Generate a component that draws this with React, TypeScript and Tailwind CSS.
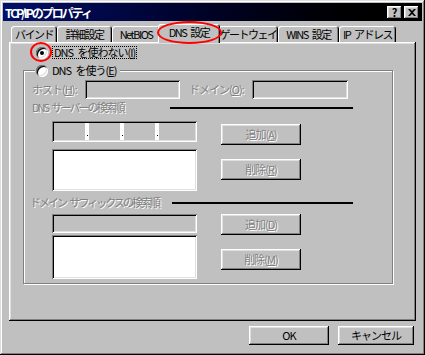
import React from 'react';

const raised =
  'shadow-[inset_-1px_-1px_0_#000,inset_1px_1px_0_#fff,inset_-2px_-2px_0_#808080,inset_2px_2px_0_#dfdfdf]';
const sunken =
  'shadow-[inset_1px_1px_0_#808080,inset_-1px_-1px_0_#fff,inset_2px_2px_0_#000,inset_-2px_-2px_0_#dfdfdf]';
const dim = 'text-[#808080] [text-shadow:1px_1px_0_#fff]';

// en space keeps the gaps visible with the tight tracking
const SP = '\u2002';

const tabs = [
  { label: 'バインド', w: 'w-[46px]' },
  { label: '詳細設定', w: 'w-[55px]' },
  { label: 'NetBIOS', w: 'w-[48px]' },
  { label: `DNS${SP}設定`, w: 'w-[62px]', active: true },
  { label: 'ゲートウェイ', w: 'w-[60px]' },
  { label: `WINS${SP}設定`, w: 'w-[61px]' },
  { label: `IP${SP}アドレス`, w: 'w-[57px]' },
];

function Radio({ checked }: { checked?: boolean }) {
  return (
    <span className="flex h-[12px] w-[12px] shrink-0 items-center justify-center rounded-full bg-white shadow-[inset_1px_1px_0_#808080,inset_-1px_-1px_0_#fff,inset_2px_2px_0_#000,inset_-2px_-2px_0_#dfdfdf]">
      {checked && <span className="h-[4px] w-[4px] rounded-full bg-black" />}
    </span>
  );
}

function Label({ text, key_ }: { text: string; key_: string }) {
  return (
    <>
      {text}(<u>{key_}</u>)
    </>
  );
}

function DimButton({ text, k, className = '' }: { text: string; k: string; className?: string }) {
  return (
    <div className={`flex h-[21px] w-[80px] items-center justify-center bg-[#c0c0c0] ${raised} ${dim} ${className}`}>
      <Label text={text} key_={k} />
    </div>
  );
}

function IpField() {
  return (
    <div className={`flex h-[21px] w-[145px] bg-white p-[2px] ${sunken}`}>
      {[0, 1, 2].map((i) => (
        <React.Fragment key={i}>
          <div className="w-[31px] bg-[#c0c0c0]" />
          <div className="flex w-[4px] items-end justify-center pb-[4px]">
            <span className="h-[1px] w-[1px] bg-black" />
          </div>
        </React.Fragment>
      ))}
      <div className="flex-1 bg-[#c0c0c0]" />
    </div>
  );
}

export default function App() {
  return (
    <div className="relative h-[355px] w-[425px] overflow-hidden whitespace-nowrap bg-[#c0c0c0] p-[3px] font-['Noto_Sans_CJK_JP',sans-serif] text-[11px] leading-[13px] tracking-[-1px] text-black shadow-[inset_-1px_-1px_0_#000,inset_1px_1px_0_#dfdfdf,inset_-2px_-2px_0_#808080,inset_2px_2px_0_#fff]">
      {/* title bar */}
      <div className="flex h-[18px] items-center justify-between bg-gradient-to-r from-[#00106a] to-black pl-[2px] pr-[3px]">
        <span className="text-[12px] font-bold tracking-[-2px] text-white">TCP/IPのプロパティ</span>
        <div className="flex gap-[2px]">
          <div className={`flex h-[13px] w-[15px] items-center justify-center bg-[#c0c0c0] text-[11px] font-bold leading-none tracking-normal ${raised}`}>
            ?
          </div>
          <div className={`flex h-[13px] w-[15px] items-center justify-center bg-[#c0c0c0] ${raised}`}>
            <svg width="8" height="7" viewBox="0 0 8 7">
              <path d="M0 0h2l2 2 2-2h2L5 3.5 8 7H6L4 5 2 7H0l3-3.5z" fill="#000" />
            </svg>
          </div>
        </div>
      </div>

      <div className="px-[6px]">
        {/* tabs */}
        <div className="mt-[3px] flex h-[18px] items-end pl-[2px] tracking-[-1.5px]">
          {tabs.map((t) =>
            t.active ? (
              <div
                key={t.label}
                className={`relative z-10 -mx-[2px] -mb-[1px] flex h-[19px] ${t.w} items-start justify-center rounded-t-[3px] bg-[#c0c0c0] pt-[2px] shadow-[inset_1px_1px_0_#fff,inset_-1px_0_0_#000,inset_-2px_0_0_#808080]`}
              >
                {t.label}
              </div>
            ) : (
              <div
                key={t.label}
                className={`flex h-[16px] ${t.w} items-center justify-center rounded-t-[3px] shadow-[inset_1px_1px_0_#fff,inset_-1px_0_0_#000,inset_-2px_0_0_#808080]`}
              >
                {t.label}
              </div>
            )
          )}
        </div>

        {/* panel */}
        <div className={`relative h-[279px] pt-[4px] ${raised}`}>
          <div className="flex h-[13px] items-center gap-[4px] pl-[27px]">
            <Radio checked />
            <span className="border border-dotted border-black px-[1px] leading-[11px]">
              DNS{SP}を使わない(<u>I</u>)
            </span>
          </div>

          <fieldset className="ml-[14px] mt-[5px] w-[370px] border border-[#808080] px-[8px] pb-[4px] shadow-[inset_1px_1px_0_#fff,1px_1px_0_#fff]">
            <legend className="ml-[3px] flex h-[13px] items-center gap-[4px] bg-[#c0c0c0] pl-[1px] pr-[3px]">
              <Radio />
              <span>
                DNS{SP}を使う(<u>E</u>)
              </span>
            </legend>

            <div className="mt-[3px] flex h-[19px] items-center">
              <span className={`w-[53px] ${dim}`}>
                <Label text="ホスト" key_="H" />:
              </span>
              <div className={`h-[19px] w-[95px] ${sunken}`} />
              <span className={`ml-[9px] w-[63px] ${dim}`}>
                <Label text="ドメイン" key_="O" />:
              </span>
              <div className={`h-[19px] w-[96px] ${sunken}`} />
            </div>

            <div className="mt-[2px] flex h-[13px] items-center">
              <span className={`w-[138px] tracking-[-2px] ${dim}`}>DNS{SP}サーバーの検索順</span>
              <div className="h-[2px] w-[183px] bg-black" />
            </div>

            <div className="mt-[7px] flex">
              <div className="ml-[20px] flex w-[145px] flex-col">
                <IpField />
                <div className={`mt-[7px] h-[42px] bg-white ${sunken}`} />
              </div>
              <div className="ml-[24px] flex flex-col">
                <DimButton text="追加" k="A" className="mt-[3px]" />
                <DimButton text="削除" k="R" className="mt-[14px]" />
              </div>
            </div>

            <div className="mt-[5px] flex h-[13px] items-center">
              <span className={`-ml-[2px] w-[142px] tracking-[-2px] ${dim}`}>ドメイン{SP}サフィックスの検索順</span>
              <div className="h-[2px] w-[181px] bg-black" />
            </div>

            <div className="mt-[5px] flex">
              <div className="ml-[20px] flex w-[145px] flex-col">
                <div className={`h-[19px] ${sunken}`} />
                <div className={`mt-[2px] h-[44px] bg-white ${sunken}`} />
              </div>
              <div className="ml-[24px] flex flex-col">
                <DimButton text="追加" k="D" />
                <DimButton text="削除" k="M" className="mt-[14px]" />
              </div>
            </div>
          </fieldset>
        </div>

        {/* dialog buttons */}
        <div className="mt-[5px] flex justify-end pr-[2px]">
          <div className={`flex h-[19px] w-[80px] items-center justify-center ${raised}`}>OK</div>
          <div className={`ml-[9px] flex h-[19px] w-[76px] items-center justify-center ${raised}`}>
            キャンセル
          </div>
        </div>
      </div>

      {/* red annotation marks */}
      <div className="pointer-events-none absolute left-[157px] top-[21px] z-20 h-[23px] w-[65px] rounded-[50%] border-2 border-[#ff0000]" />
      <div className="pointer-events-none absolute left-[30px] top-[42px] z-20 h-[20px] w-[22px] rounded-[50%] border-2 border-[#ff0000]" />
    </div>
  );
}
